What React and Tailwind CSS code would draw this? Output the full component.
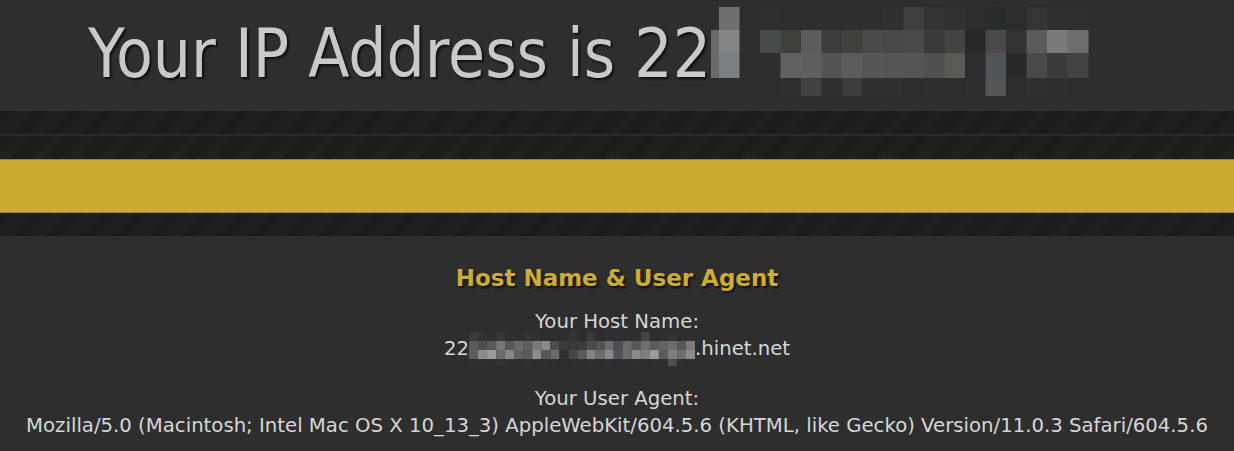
const titleFont = { fontFamily: '"DejaVu Sans Condensed", "DejaVu Sans", sans-serif' };
const bodyFont = { fontFamily: '"DejaVu Sans", Verdana, sans-serif' };

// mosaic shades for the blurred-out IP in the title (rows of 18 cells)
const titleCells = [
  ["#6e6e6e", "#2c2c2c", "#2f2f2f", null, null, null, null, null, "#303030", "#3e3e3e", "#343434", "#323232", null, "#2a2c2c", "#2d2d2d", "#353535", "#2f2f2f", "#2f2f2f"],
  ["#858585", "#2e2e2e", "#464a4d", "#413f3b", "#5c5c5c", "#3d3c3a", "#41403c", "#4a4a4a", "#4a4846", "#4b4a48", "#3a3a3a", "#444444", "#292929", "#4b4949", "#333333", "#5a5a5a", "#7a7a7a", "#6e6e6e"],
  ["#7c7f82", "#2c2c2c", "#2e2e2e", "#616161", "#5f5f5f", "#545454", "#5c5c5c", "#555757", "#555555", "#545555", "#4f4f4f", "#5a5955", "#2c2c2c", "#50535a", "#292929", "#4a4949", "#3b3b3b", "#434342"],
  [null, null, null, "#2f2f2f", "#434140", "#303030", "#3d3d3b", "#2f2f2f", "#2f2f2f", "#2c2c2c", "#2e2e2e", "#2c2c2c", null, "#555555", "#2d2d2d", "#303030", null, "#2c2c2c"],
];
const titleRows = [23, 23, 25, 18];

const hostShades = [
  "3a3a3a 333333 2e2e2e 363636 303030 2f2f2f 343434 303030 2e2e2e 2d2d2d 2f2f2f 333333 2c2c2c 3a3a3a 2e2e2e 303030 303030 2e2e2e 2f2f2f 444444 2e2e2e 2f2f2f 333333 2e2e2e 2f2f2f",
  "5e5a57 4f4e4c 5a5a55 777777 585858 6e6a66 5f5f5f 7a7a7a 8a8a8a 4e4e4e 3a3a3a 353a3a 3c3c3c 4e4a46 545454 6a6e72 4d4e52 6a6a6a 55585b 6e6e6e 5c5c5c 646464 6c6c6c 585858 7a7a7a",
  "5a5e62 8a8c8e 9a9a9a 6a6a6a 888888 5d6064 5a5a5a 8e8e8e 5c5555 6a6a6a 303030 4a4645 5a5a5a 838383 6e6a66 8a8a8a 50545a 6a6a6a 8a8886 7e7e7e 9a9a9a 5a5a5a 7e7e7e 6e6e6e 8a8a8a",
  "2f2f2f 303030 2e2e2e 333333 2f2f2f 2e2e2e 303030 2e2e2e 2f2f2f 2e2e2e 2d2d2d 2f2f2f 2e2e2e 303030 2e2e2e 2f2f2f 2e2e2e 2f2f2f 303030 2e2e2e 2f2f2f 2e2e2e 4a4e55 2f2f2f 2e2e2e",
].map((r) => r.split(" ").map((c) => "#" + c));

function TitleMosaic() {
  let y = 0;
  return (
    <svg width="378" height="89" className="block">
      <rect x="0" y="23" width="8" height="48" fill="#6a6a6a" />
      {titleCells.map((row, ri) => {
        const top = y;
        y += titleRows[ri];
        return row.map((c, ci) =>
          c ? <rect key={ri + "-" + ci} x={8 + ci * 20.5} y={top} width="21" height={titleRows[ri]} fill={c} /> : null
        );
      })}
    </svg>
  );
}

function HostMosaic() {
  return (
    <svg width="226" height="34" className="block -my-[3px]">
      {hostShades.map((row, ri) =>
        row.map((c, ci) => <rect key={ri + "-" + ci} x={ci * 9.04} y={ri * 9} width="9.1" height="9" fill={c} />)
      )}
    </svg>
  );
}

function StripeBand({ className = "" }) {
  return (
    <div
      className={`bg-[repeating-linear-gradient(135deg,#1c1c1c_0px,#1c1c1c_12px,#202020_12px,#202020_24px)] ${className}`}
    />
  );
}

export default function App() {
  return (
    <div className="w-[1234px] h-[451px] overflow-hidden bg-[#2e2e2e]">
      <header className="h-[111px] flex items-start pl-[88px] pt-[13px]" style={titleFont}>
        <h1 className="text-[67px] leading-[82px] text-[#c9c9c9] [text-shadow:2px_2px_2px_#111] whitespace-nowrap">
          Your IP Address is 22
        </h1>
        <div className="mt-[-6px]">
          <TitleMosaic />
        </div>
      </header>

      <div className="flex flex-col">
        <StripeBand className="h-[23px]" />
        <div className="h-[2px] bg-[#2a2a2a]" />
        <StripeBand className="h-[23px]" />
        <div className="h-[54px] bg-[#ccab33] border-y border-[#9c8430]" />
        <StripeBand className="h-[23px]" />
      </div>

      <section className="flex flex-col items-center pt-[26px] text-[#d6d6d6]" style={bodyFont}>
        <h2 className="text-[23px] leading-[32px] font-bold text-[#ceac33] [text-shadow:2px_2px_2px_#111]">
          Host Name &amp; User Agent
        </h2>
        <p className="mt-[14px] text-[19.7px] leading-[27px]">Your Host Name:</p>
        <p className="h-[27px] text-[19.7px] leading-[27px] flex items-center">
          <span>22</span>
          <HostMosaic />
          <span>.hinet.net</span>
        </p>
        <p className="mt-[23px] text-[19.7px] leading-[27px]">Your User Agent:</p>
        <p className="text-[19.7px] leading-[27px] whitespace-nowrap">
          Mozilla/5.0 (Macintosh; Intel Mac OS X 10_13_3) AppleWebKit/604.5.6 (KHTML, like Gecko) Version/11.0.3 Safari/604.5.6
        </p>
      </section>
    </div>
  );
}
